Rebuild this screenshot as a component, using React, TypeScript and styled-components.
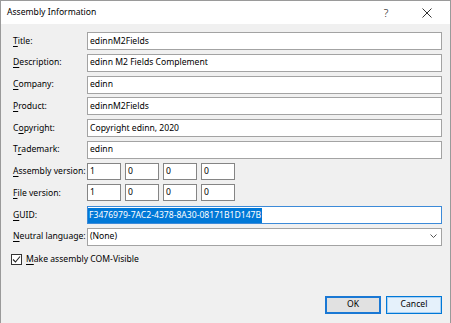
import React from "react";
import styled, { createGlobalStyle } from "styled-components";

const Global = createGlobalStyle`
  html, body { margin: 0; padding: 0; background: #f0f0f0; }
  body { font-family: "Noto Sans", "Open Sans", sans-serif; font-size: 8.6px; color: #000; }
  * { box-sizing: border-box; }
`;

const Window = styled.div`
  width: 451px;
  height: 323px;
  background: #f0f0f0;
  border: 1px solid #9a9a9a;
  border-bottom: none;
  display: flex;
  flex-direction: column;
  overflow: hidden;
`;

const TitleBar = styled.div`
  height: 23px;
  background: #fff;
  display: flex;
  align-items: center;
  padding-left: 6px;
  flex-shrink: 0;
`;

const TitleText = styled.div`
  flex: 1;
  font-size: 8.6px;
  line-height: 1;
  padding-bottom: 1px;
`;

const CaptionButton = styled.div<{ $w: number }>`
  width: ${(p) => p.$w}px;
  height: 23px;
  display: flex;
  align-items: center;
  justify-content: center;
  font-size: 11px;
  font-weight: 300;
  color: #222;
`;

const Body = styled.div`
  flex: 1;
  padding: 8px 8px 0 11px;
  display: flex;
  flex-direction: column;
`;

const FormGrid = styled.div`
  display: grid;
  grid-template-columns: 75px 1fr;
  grid-auto-rows: 18px;
  row-gap: 3.78px;
`;

const Label = styled.div`
  display: flex;
  align-items: center;
  white-space: nowrap;
  padding-left: 1px;
  padding-bottom: 1px;
`;

const Key = styled.span`
  text-decoration: underline;
  text-underline-offset: 1.5px;
  text-decoration-thickness: 1px;
`;

const Field = styled.div<{ $focused?: boolean }>`
  height: 18px;
  background: #fff;
  border: 1px solid ${(p) => (p.$focused ? "#3c8ad8" : "#a3a3a3")};
  display: flex;
  align-items: center;
  padding: 0 0 1px ${(p) => (p.$focused ? 0 : 2)}px;
  white-space: nowrap;
  overflow: hidden;
`;

const Selected = styled.span`
  background: #0078d7;
  color: #fff;
  height: 15px;
  display: flex;
  align-items: center;
  padding: 0 1px 1px 1px;
  margin-top: 1px;
`;

const VersionRow = styled.div`
  display: flex;
  gap: 4px;
  align-items: flex-start;
`;

const VersionBox = styled.div`
  width: 34px;
  height: 17px;
  background: #fff;
  border: 1px solid #858585;
  display: flex;
  align-items: center;
  padding: 0 0 1px 2px;
`;

const Combo = styled(Field)`
  justify-content: space-between;
  padding-right: 4px;
`;

const CheckRow = styled.div`
  margin-top: 8px;
  margin-left: -1px;
  display: flex;
  align-items: center;
  gap: 4px;
  height: 11px;
`;

const CheckBox = styled.div`
  width: 11px;
  height: 11px;
  border: 1px solid #333;
  background: #fff;
  display: flex;
  align-items: center;
  justify-content: center;
`;

const CheckLabel = styled.span`
  padding-bottom: 1px;
`;

const ButtonRow = styled.div`
  margin-top: 31px;
  display: flex;
  justify-content: flex-end;
  gap: 5px;
`;

const Button = styled.div<{ $primary?: boolean }>`
  width: 56px;
  height: 18px;
  display: flex;
  align-items: center;
  justify-content: center;
  padding-bottom: 1px;
  background: ${(p) => (p.$primary ? "#e1e1e1" : "#e5f1fb")};
  border: ${(p) => (p.$primary ? "2px solid #1a78d4" : "1px solid #0078d7")};
  box-shadow: ${(p) => (p.$primary ? "none" : "inset 0 0 0 1px #a9d0f3")};
`;

const rows: { key: string; rest: string; pre?: string; value: string }[] = [
  { pre: "", key: "T", rest: "itle:", value: "edinnM2Fields" },
  { pre: "", key: "D", rest: "escription:", value: "edinn M2 Fields Complement" },
  { pre: "", key: "C", rest: "ompany:", value: "edinn" },
  { pre: "", key: "P", rest: "roduct:", value: "edinnM2Fields" },
  { pre: "C", key: "o", rest: "pyright:", value: "Copyright edinn, 2020" },
  { pre: "T", key: "r", rest: "ademark:", value: "edinn" },
];

function Lbl({ pre = "", k, rest }: { pre?: string; k: string; rest: string }) {
  return (
    <Label>
      {pre}
      <Key>{k}</Key>
      {rest}
    </Label>
  );
}

function Versions({ values }: { values: string[] }) {
  return (
    <VersionRow>
      {values.map((v, i) => (
        <VersionBox key={i}>{v}</VersionBox>
      ))}
    </VersionRow>
  );
}

export default function App() {
  return (
    <>
      <Global />
      <Window>
        <TitleBar>
          <TitleText>Assembly Information</TitleText>
          <CaptionButton $w={36}>?</CaptionButton>
          <CaptionButton $w={46}>
            <svg width="10" height="10" viewBox="0 0 10 10">
              <path d="M0.5 0.5 L9.5 9.5 M9.5 0.5 L0.5 9.5" stroke="#333" strokeWidth="1" fill="none" />
            </svg>
          </CaptionButton>
        </TitleBar>
        <Body>
          <FormGrid>
            {rows.map((r) => (
              <React.Fragment key={r.rest}>
                <Lbl pre={r.pre} k={r.key} rest={r.rest} />
                <Field>{r.value}</Field>
              </React.Fragment>
            ))}
            <Lbl k="A" rest="ssembly version:" />
            <Versions values={["1", "0", "0", "0"]} />
            <Lbl k="F" rest="ile version:" />
            <Versions values={["1", "0", "0", "0"]} />
            <Lbl k="G" rest="UID:" />
            <Field $focused>
              <Selected>F3476979-7AC2-4378-8A30-08171B1D147B</Selected>
            </Field>
            <Lbl k="N" rest="eutral language:" />
            <Combo>
              <span>(None)</span>
              <svg width="7" height="4" viewBox="0 0 7 4">
                <path d="M0.5 0.5 L3.5 3.5 L6.5 0.5" stroke="#555" strokeWidth="1" fill="none" />
              </svg>
            </Combo>
          </FormGrid>
          <CheckRow>
            <CheckBox>
              <svg width="9" height="9" viewBox="0 0 9 9">
                <path d="M1 4.5 L3.5 7 L8 1.5" stroke="#222" strokeWidth="1.1" fill="none" />
              </svg>
            </CheckBox>
            <CheckLabel>
              <Key>M</Key>ake assembly COM-Visible
            </CheckLabel>
          </CheckRow>
          <ButtonRow>
            <Button $primary>OK</Button>
            <Button>Cancel</Button>
          </ButtonRow>
        </Body>
      </Window>
    </>
  );
}
